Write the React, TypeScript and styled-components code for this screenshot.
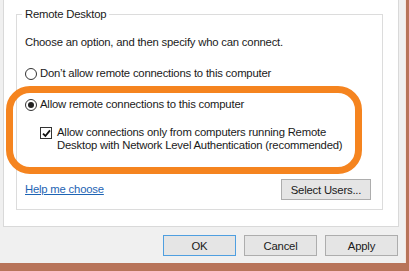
import React from 'react';
import styled, {createGlobalStyle} from "styled-components";

const GlobalStyle = createGlobalStyle`
  html, body {
    margin: 0;
    padding: 0;
    background: #b8745a;
  }
  body {
    font-family: "Liberation Sans", Arial, sans-serif;
    font-size: 11.3px;
    letter-spacing: -0.2px;
    color: #1a1a1a;
  }
`;

function App() {
    return (
        <>
            <GlobalStyle/>
            <Screen>
                <Dialog>
                    <TabPage>
                        <Group>
                            <Legend>Remote Desktop</Legend>
                            <Intro>Choose an option, and then specify who can connect.</Intro>
                            <Option top={16}>
                                <Radio/>
                                <span>Don&#8217;t allow remote connections to this computer</span>
                            </Option>
                            <Option top={16}>
                                <Radio checked/>
                                <span>Allow remote connections to this computer</span>
                            </Option>
                            <CheckRow>
                                <CheckBox>
                                    <svg width="9" height="9" viewBox="0 0 9 9">
                                        <path d="M1 4.6 L3.4 7 L8 1.4" fill="none" stroke="#111" strokeWidth="1.8"/>
                                    </svg>
                                </CheckBox>
                                <CheckText>
                                    Allow connections only from computers running Remote<br/>
                                    Desktop with Network Level Authentication (recommended)
                                </CheckText>
                            </CheckRow>
                            <GroupFooter>
                                <HelpLink href="#">Help me choose</HelpLink>
                                <Button width={90}>Select Users...</Button>
                            </GroupFooter>
                        </Group>
                    </TabPage>
                    <ButtonBar>
                        <Button width={73} primary>OK</Button>
                        <Button width={73}>Cancel</Button>
                        <Button width={73}>Apply</Button>
                    </ButtonBar>
                </Dialog>
                <Highlight/>
            </Screen>
        </>
    );
}

const Screen = styled.div`
  position: relative;
  width: 409px;
  height: 271px;
  overflow: hidden;
  background: #b8745a;
`;

const Dialog = styled.div`
  display: flex;
  flex-direction: column;
  width: 406px;
  height: 263px;
  background: #f0f0f0;
  border-right: 1px solid #f6e6de;
  box-sizing: border-box;
`;

const TabPage = styled.div`
  box-sizing: border-box;
  margin: -1px 0 0 3px;
  width: 396px;
  height: 228px;
  background: #ffffff;
  border: 1px solid #d9d9d9;
  padding: 14px 0 0 12px;
`;

const Group = styled.div`
  position: relative;
  box-sizing: border-box;
  width: 367px;
  height: 196px;
  border: 1px solid #dcdcdc;
  padding: 0 11px 0 8px;
  display: flex;
  flex-direction: column;
  white-space: nowrap;
`;

const Legend = styled.span`
  position: absolute;
  top: -8px;
  left: 5px;
  padding: 0 3px;
  background: #ffffff;
  line-height: 15px;
`;

const Intro = styled.div`
  margin-top: 20px;
  line-height: 15px;
`;

const Option = styled.div<{ top: number }>`
  display: flex;
  align-items: center;
  gap: 3px;
  margin-top: ${p => p.top}px;
  line-height: 15px;
`;

const Radio = styled.span<{ checked?: boolean }>`
  position: relative;
  box-sizing: border-box;
  width: 12px;
  height: 12px;
  border-radius: 50%;
  border: 1px solid #333333;
  background: #ffffff;

  &::after {
    content: "";
    display: ${p => (p.checked ? 'block' : 'none')};
    position: absolute;
    left: 2px;
    top: 2px;
    width: 6px;
    height: 6px;
    border-radius: 50%;
    background: #222222;
  }
`;

const CheckRow = styled.div`
  display: flex;
  align-items: flex-start;
  gap: 5px;
  margin: 14px 0 0 15px;
`;

const CheckBox = styled.span`
  box-sizing: border-box;
  width: 12px;
  height: 12px;
  margin-top: 1px;
  border: 1px solid #333333;
  background: #ffffff;
  display: flex;
  align-items: center;
  justify-content: center;
`;

const CheckText = styled.div`
  line-height: 13px;
`;

const GroupFooter = styled.div`
  display: flex;
  align-items: center;
  justify-content: space-between;
  margin-top: 27px;
`;

const HelpLink = styled.a`
  color: #1e64b4;
  text-decoration: underline;
  line-height: 15px;
`;

const Button = styled.button<{ width: number; primary?: boolean }>`
  box-sizing: border-box;
  width: ${p => p.width}px;
  height: 21px;
  padding: 0;
  font-family: inherit;
  font-size: 11.3px;
  letter-spacing: -0.2px;
  color: #1a1a1a;
  background: #e5e5e5;
  border: 1px solid ${p => (p.primary ? '#4f9fe0' : '#adadad')};
`;

const ButtonBar = styled.div`
  display: flex;
  justify-content: flex-end;
  gap: 8px;
  margin-top: 8px;
  padding-right: 7px;
`;

const Highlight = styled.div`
  position: absolute;
  left: 6px;
  top: 86px;
  width: 356px;
  height: 88px;
  box-sizing: border-box;
  border: 7px solid #f5841f;
  border-radius: 24px;
  pointer-events: none;
`;

export default App;
